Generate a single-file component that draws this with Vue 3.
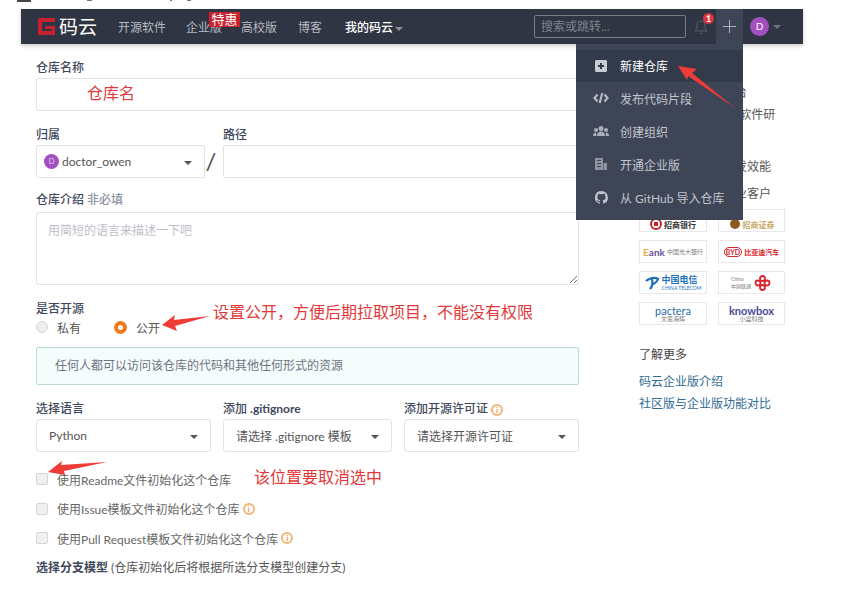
<script setup>
const navItems = [
  { label: '开源软件', w: 68 },
  { label: '企业版', w: 55 },
  { label: '高校版', w: 57 },
  { label: '博客', w: 47 }
];
const menu = [
  { label: '新建仓库', icon: 'plus', active: true },
  { label: '发布代码片段', icon: 'code' },
  { label: '创建组织', icon: 'group' },
  { label: '开通企业版', icon: 'building' },
  { label: '从 GitHub 导入仓库', icon: 'github' }
];
const checks = [
  { label: '使用Readme文件初始化这个仓库', tip: false },
  { label: '使用Issue模板文件初始化这个仓库', tip: true },
  { label: '使用Pull Request模板文件初始化这个仓库', tip: true }
];
const introLines = ['企业级代码托管平台', '面向 IT 团队的便捷软件研', '', '助企业大幅提升研发效能', '服务超过十万家企业客户'];
</script>

<template>
  <div class="page">
    <div class="top-strip">
      <span class="strip-block"></span>
      <span class="speck s1"></span>
      <span class="speck s2"></span>
      <span class="speck s3"></span>
    </div>

    <header class="navbar">
      <div class="logo">
        <svg width="17" height="17" viewBox="0 0 17 17">
          <path d="M1 0h16v4H4v9h10v-2H7V8h10v9H1l-1-1V1z" fill="#c7202e" />
        </svg>
        <span>码云</span>
      </div>
      <nav class="nav-links">
        <a v-for="item in navItems" :key="item.label" :style="{ width: item.w + 'px' }">{{ item.label }}</a>
        <a class="nav-mine">我的码云<i class="caret"></i></a>
      </nav>
      <span class="sale-tag">特惠</span>
      <div class="nav-right">
        <div class="search">搜索或跳转...</div>
        <div class="bell">
          <svg width="14" height="17" viewBox="0 0 14 17" fill="none" stroke="#59606e" stroke-width="1">
            <path d="M1 13c1.500-1.500 2-3 2-6 0-2.500 1.500-4 4-4s4 1.500 4 4c0 3 .5 4.500 2 6z" />
            <path d="M5.500 15c.5 1 2.500 1 3 0" />
          </svg>
          <span class="bell-badge">1</span>
        </div>
        <div class="plus-tab">
          <svg width="15" height="15" viewBox="0 0 15 15" stroke="#aeb3bd" stroke-width="1">
            <path d="M7.500 1v13M1 7.500h13" />
          </svg>
        </div>
        <div class="avatar">D</div>
        <i class="caret caret-dim"></i>
      </div>
    </header>

    <div class="content">
      <main class="form">
        <label class="label">仓库名称</label>
        <div class="input name-input"></div>

        <div class="owner-row">
          <div class="owner-col">
            <label class="label">归属</label>
            <div class="input select owner">
              <span class="mini-avatar">D</span>
              <span>doctor_owen</span>
              <i class="caret caret-dark"></i>
            </div>
          </div>
          <span class="slash">/</span>
          <div class="path-col">
            <label class="label">路径</label>
            <div class="input"></div>
          </div>
        </div>

        <label class="label intro-label">仓库介绍 <em>非必填</em></label>
        <div class="input textarea">
          用简短的语言来描述一下吧
          <svg class="grip" width="8" height="8" viewBox="0 0 8 8" stroke="#777" stroke-width="1">
            <path d="M1 8l7-7M5 8l3-3" />
          </svg>
        </div>

        <label class="label open-label">是否开源</label>
        <div class="radios">
          <span class="radio"><i class="dot"></i>私有</span>
          <span class="radio"><i class="dot dot-on"></i>公开</span>
        </div>
        <div class="notice">任何人都可以访问该仓库的代码和其他任何形式的资源</div>

        <div class="select-row">
          <div>
            <label class="label">选择语言</label>
            <div class="input select picker">Python<i class="caret caret-dark"></i></div>
          </div>
          <div>
            <label class="label">添加 <b>.gitignore</b></label>
            <div class="input select picker">请选择 .gitignore 模板<i class="caret caret-dark"></i></div>
          </div>
          <div>
            <label class="label">添加开源许可证<i class="tip">i</i></label>
            <div class="input select picker">请选择开源许可证<i class="caret caret-dark"></i></div>
          </div>
        </div>

        <ul class="checks">
          <li v-for="c in checks" :key="c.label">
            <i class="box"></i>{{ c.label }}<i v-if="c.tip" class="tip">i</i>
          </li>
        </ul>

        <p class="label branch"><b>选择分支模型</b> <span>(仓库初始化后将根据所选分支模型创建分支)</span></p>
      </main>

      <aside class="side">
        <p v-for="(line, i) in introLines" :key="i" class="side-line">{{ line }}</p>
        <div class="logos">
          <div class="card bottom-logo">
            <svg width="12" height="12" viewBox="0 0 12 12"><circle cx="6" cy="6" r="5" fill="none" stroke="#c8202e" stroke-width="2" /><rect x="4" y="4" width="4" height="4" fill="#c8202e" /></svg>
            <b class="logo-a">招商银行</b>
          </div>
          <div class="card bottom-logo">
            <svg width="12" height="12" viewBox="0 0 12 12"><circle cx="6" cy="6" r="5" fill="#8a5a20" /></svg>
            <b class="logo-b">招商证券</b>
          </div>
          <div class="card"><b class="logo-c"><u>E</u>ank</b><small class="small-bank">中国光大银行</small></div>
          <div class="card"><b class="logo-d"><s>BYD</s>比亚迪汽车</b></div>
          <div class="card">
            <svg width="15" height="14" viewBox="0 0 15 14" fill="none" stroke="#1c6fb8" stroke-width="2.200">
              <path d="M1 5c3-3 9-4 12-2-1 3-4 5-7 6M7 3c1 4 0 8-2 10" />
            </svg>
            <span class="telecom"><b>中国电信</b><small>CHINA TELECOM</small></span>
          </div>
          <div class="card">
            <span class="telecom grey"><small>China</small><small>中国联通</small></span>
            <svg width="19" height="16" viewBox="0 0 19 16" fill="none" stroke="#d8262e" stroke-width="1.800">
              <circle cx="9.500" cy="3.500" r="2.500" />
              <circle cx="5" cy="8" r="2.500" />
              <circle cx="14" cy="8" r="2.500" />
              <circle cx="9.500" cy="12.500" r="2.500" />
            </svg>
          </div>
          <div class="card stacked"><b class="logo-g">pactera</b><small>文思海辉</small></div>
          <div class="card stacked"><b class="logo-h">knowbox</b><small>小盒科技</small></div>
        </div>
        <h4 class="side-title">了解更多</h4>
        <a class="side-link">码云企业版介绍</a>
        <a class="side-link">社区版与企业版功能对比</a>
      </aside>
    </div>

    <!-- dropdown under the + tab -->
    <ul class="menu">
      <li v-for="m in menu" :key="m.label" :class="{ active: m.active }">
        <span class="menu-icon">
          <svg v-if="m.icon === 'plus'" width="12" height="12" viewBox="0 0 12 12">
            <path fill-rule="evenodd" d="M0 1l1-1h10l1 1v10l-1 1H1l-1-1zM5 3v2H3v2h2v2h2V7h2V5H7V3z" fill="#c9ccd3" />
          </svg>
          <svg v-else-if="m.icon === 'code'" width="16" height="12" viewBox="0 0 16 12" fill="none" stroke="#b4b8c1" stroke-width="2.200">
            <path d="M4.500 2.500L1.500 6l3 3.500M11.500 2.500L14.500 6l-3 3.500M9.300 1L6.700 11" />
          </svg>
          <svg v-else-if="m.icon === 'group'" width="16" height="10" viewBox="0 0 16 10" fill="#a9adb7">
            <circle cx="8" cy="2.500" r="2.500" />
            <circle cx="3" cy="4" r="2" />
            <circle cx="13" cy="4" r="2" />
            <path d="M4 10c0-3 1.500-4.500 4-4.500s4 1.500 4 4.500zM0 10c0-2 1-3.500 3-3.500l.5 3.500zM16 10c0-2-1-3.500-3-3.500l-.5 3.500z" />
          </svg>
          <svg v-else-if="m.icon === 'building'" width="12" height="12" viewBox="0 0 12 12" fill="#8f95a2">
            <path fill-rule="evenodd" d="M0 0h8v12H0zM2 2v1h4V2zM2 5v1h4V5zM2 8v1h4V8zM8.500 5H12v7H8.500z" />
          </svg>
          <svg v-else width="13" height="13" viewBox="0 0 16 16" fill="#c0c4cc">
            <path d="M8 0a8 8 0 0 0-2.500 15.600c.4.100.5-.2.500-.4v-1.400c-2.200.5-2.700-1-2.700-1-.4-.9-.9-1.200-.9-1.200-.7-.5.100-.5.100-.5.800.100 1.200.8 1.200.8.700 1.200 1.900.9 2.300.7.100-.5.300-.9.500-1.100-1.800-.2-3.600-.9-3.600-4 0-.9.300-1.600.8-2.100-.1-.2-.4-1 .1-2.100 0 0 .7-.2 2.200.8a7.500 7.500 0 0 1 4 0c1.500-1 2.200-.8 2.200-.8.500 1.100.2 1.900.1 2.100.5.600.8 1.300.8 2.100 0 3.100-1.900 3.700-3.700 3.900.3.300.6.800.6 1.500v2.200c0 .2.100.5.600.4A8 8 0 0 0 8 0z" />
          </svg>
        </span>
        {{ m.label }}
      </li>
    </ul>

    <!-- red notes drawn over the screenshot -->
    <span class="note note-name">仓库名</span>
    <span class="note note-open">设置公开，方便后期拉取项目，不能没有权限</span>
    <span class="note note-check">该位置要取消选中</span>
    <svg class="arrows" width="856" height="603" viewBox="0 0 856 603" fill="#ee3b36">
      <polygon points="678,66 697,69 692,73 735,108 688,76 687,80" />
      <polygon points="162,325 175,315 174,320 210,316 175,326 177,331" />
      <polygon points="48,472 62,461 61,465 107,462 64,471 65,475" />
    </svg>
  </div>
</template>

<style>
html,
body {
  margin: 0;
  background: #fff;
}
</style>

<style scoped>
.page {
  position: relative;
  width: 856px;
  height: 603px;
  overflow: hidden;
  font-family: Lato, "Noto Sans CJK SC", sans-serif;
  font-size: 12px;
  color: #40485b;
}

.top-strip {
  display: flex;
  align-items: flex-start;
  height: 9px;
  padding-left: 17px;
  box-sizing: border-box;
}

.strip-block {
  width: 14px;
  height: 2px;
  background: #444;
}

.speck {
  height: 1px;
  background: #777;
}

.s1 { width: 5px; margin-left: 56px; }
.s2 { width: 2px; margin-left: 78px; }
.s3 { width: 4px; margin-left: 15px; }

.navbar {
  position: relative;
  display: flex;
  align-items: center;
  width: 782px;
  height: 35px;
  margin-left: 21px;
  padding-left: 17px;
  box-sizing: border-box;
  background: #2f3542;
  box-shadow: 0 2px 4px rgba(0, 0, 0, 0.2);
}

.logo {
  display: flex;
  align-items: center;
  gap: 4px;
  width: 80px;
  color: #fff;
  font-size: 19px;
  line-height: 1;
}

.nav-links {
  display: flex;
  align-items: center;
}

.nav-links a {
  display: block;
  color: #b6bac2;
  white-space: nowrap;
}

.nav-mine {
  color: #fff !important;
  font-weight: 500;
}

.caret {
  display: inline-block;
  margin-left: 2px;
  vertical-align: 1px;
  border-left: 4px solid transparent;
  border-right: 4px solid transparent;
  border-top: 4px solid #8d929c;
}

.caret-dim {
  margin-left: 4px;
  border-top-color: #6f7480;
}

.caret-dark {
  position: absolute;
  right: 12px;
  top: 15px;
  margin: 0;
  border-top-color: #555;
}

.sale-tag {
  position: absolute;
  left: 188px;
  top: 3px;
  width: 31px;
  height: 15px;
  background: #c7202e;
  color: #fff;
  font-size: 13px;
  line-height: 15px;
  text-align: center;
}

.nav-right {
  position: absolute;
  right: 0;
  top: 0;
  bottom: 0;
  left: 513px;
  display: flex;
  align-items: center;
}

.search {
  width: 152px;
  height: 23px;
  box-sizing: border-box;
  padding-left: 6px;
  border: 1px solid #777c88;
  border-radius: 2px;
  color: #7f8490;
  line-height: 21px;
}

.bell {
  position: relative;
  display: flex;
  justify-content: center;
  width: 30px;
}

.bell-badge {
  position: absolute;
  left: 17px;
  top: -5px;
  width: 11px;
  height: 11px;
  border-radius: 50%;
  background: #d9363e;
  color: #fff;
  font-size: 9px;
  font-weight: 700;
  line-height: 11px;
  text-align: center;
}

.plus-tab {
  display: flex;
  align-items: center;
  justify-content: center;
  width: 27px;
  height: 100%;
  background: #3e4557;
}

.avatar {
  width: 19px;
  height: 19px;
  margin-left: 7px;
  border-radius: 50%;
  background: #a24fc0;
  color: #fff;
  font-size: 10px;
  line-height: 19px;
  text-align: center;
}

.content {
  display: flex;
  padding: 15px 0 0 36px;
}

.form {
  width: 543px;
  flex: none;
}

.label {
  display: block;
  height: 17px;
  margin-bottom: 2px;
  color: #40485b;
  font-weight: 500;
  line-height: 17px;
  white-space: nowrap;
}

.label em {
  color: #8c92a4;
  font-style: normal;
}

.input {
  position: relative;
  height: 33px;
  box-sizing: border-box;
  border: 1px solid #e3e4e6;
  border-radius: 2px;
  background: #fff;
}

.owner-row {
  display: flex;
  margin-top: 15px;
}

.owner-col {
  width: 169px;
}

.slash {
  width: 18px;
  padding: 20px 6px 0 0;
  box-sizing: border-box;
  font-size: 24px;
  line-height: 30px;
  text-align: center;
  color: #555;
}

.path-col {
  flex: 1;
}

.select {
  display: flex;
  align-items: center;
  color: #555;
}

.owner {
  padding-left: 7px;
  gap: 3px;
}

.mini-avatar {
  width: 15px;
  height: 15px;
  border-radius: 50%;
  background: #a24fc0;
  color: #e6c9f0;
  font-size: 8px;
  line-height: 15px;
  text-align: center;
}

.intro-label {
  margin-top: 13px;
  margin-bottom: 4px;
}

.textarea {
  height: 73px;
  padding: 8px 11px;
  color: #bbbec6;
}

.grip {
  position: absolute;
  right: 1px;
  bottom: 1px;
}

.open-label {
  margin-top: 15px;
  margin-bottom: 0;
}

.radios {
  display: flex;
  height: 20px;
  align-items: center;
  color: #555;
}

.radio {
  display: flex;
  align-items: center;
  gap: 9px;
  width: 78px;
}

.dot {
  width: 12px;
  height: 12px;
  box-sizing: border-box;
  border: 1px solid #d5d6d8;
  border-radius: 50%;
  background: #eee;
}

.dot-on {
  width: 13px;
  height: 13px;
  border: 4px solid #f0791b;
  background: #fff;
}

.notice {
  height: 38px;
  margin-top: 10px;
  padding-left: 18px;
  box-sizing: border-box;
  border: 1px solid #b9dcd8;
  border-radius: 2px;
  background: #f5fcfc;
  color: #6d7480;
  line-height: 36px;
}

.select-row {
  display: grid;
  grid-template-columns: 175px 169px 175px;
  gap: 12px;
  margin-top: 15px;
}

.picker {
  padding-left: 12px;
  border-radius: 3px;
  white-space: nowrap;
}

.tip {
  display: inline-block;
  width: 8px;
  height: 8px;
  margin-left: 3px;
  border: 2px solid #f3b477;
  border-radius: 50%;
  color: #e98a2c;
  font-size: 7px;
  font-style: normal;
  font-weight: 700;
  line-height: 8px;
  text-align: center;
}

.checks {
  margin: 18px 0 0;
  padding: 0;
  list-style: none;
  color: #666;
}

.checks li {
  display: flex;
  align-items: center;
  height: 18px;
  margin-bottom: 11.500px;
}

.box {
  width: 12px;
  height: 12px;
  margin-right: 9px;
  box-sizing: border-box;
  border: 1px solid #d5d6d8;
  border-radius: 2px;
  background: #f0f0f0;
}

.branch {
  margin: 0;
  font-weight: 400;
}

.branch span {
  color: #555;
}

.side {
  width: 146px;
  margin-left: 60px;
  flex: none;
  padding-top: 23px;
}

.side-line {
  height: 22px;
  margin: 0;
  color: #555;
  line-height: 22px;
  white-space: nowrap;
}

.side-line:nth-child(3) {
  height: 30px;
}

.side-line:nth-child(5) {
  margin-top: 5px;
}

.logos {
  display: grid;
  grid-template-columns: 68px 67px;
  grid-auto-rows: 23px;
  gap: 8px 11px;
  margin-top: 4px;
}

.card {
  display: flex;
  align-items: center;
  justify-content: center;
  gap: 2px;
  box-sizing: border-box;
  border: 1px solid #e8e8e8;
  overflow: hidden;
  font-size: 8px;
  white-space: nowrap;
}

.bottom-logo {
  align-items: flex-end;
  padding-bottom: 1px;
}

.card small {
  font-size: 6px;
  color: #777;
}

.small-bank {
  margin-top: -1px;
}

.stacked {
  flex-direction: column;
  gap: 0;
  line-height: 1;
}

.telecom {
  display: flex;
  flex-direction: column;
  gap: 2px;
  line-height: 1;
}

.telecom b {
  color: #1c6fb8;
  font-size: 9px;
  line-height: 9px;
}

.card .telecom small {
  font-size: 5px;
  line-height: 5px;
  color: #1c6fb8;
}

.card .telecom.grey small {
  color: #777;
}

.logo-a { color: #333; }
.logo-b { color: #c8a868; }
.logo-c { color: #6a4c9c; font-size: 10px; }
.logo-c u { color: #eda93a; text-decoration: none; }
.logo-d { color: #d8262e; font-size: 7px; }
.logo-d s {
  margin-right: 2px;
  padding: 0 1px;
  border: 1px solid #d8262e;
  border-radius: 5px;
  text-decoration: none;
}
.logo-g { color: #2d6aa8; font-size: 11px; font-weight: 400; }
.logo-h { color: #4a4a98; font-size: 11px; }

.side-title {
  margin: 21px 0 0;
  font-size: 12px;
  font-weight: 400;
  color: #444;
  line-height: 17px;
}

.side-link {
  display: block;
  margin-top: 5px;
  color: #2f6b94;
  line-height: 17px;
  white-space: nowrap;
}

.side-title + .side-link {
  margin-top: 10px;
}

.menu {
  position: absolute;
  left: 576px;
  top: 44px;
  width: 167px;
  height: 176px;
  margin: 0;
  padding: 6px 0 0;
  box-sizing: border-box;
  background: #3e4557;
  list-style: none;
  color: #c3c6cd;
}

.menu li {
  display: flex;
  align-items: center;
  height: 33px;
  padding: 0 0 1px 16px;
  box-sizing: border-box;
}

.menu .active {
  height: 32px;
  background: #333a4a;
  color: #fff;
}

.menu-icon {
  display: flex;
  align-items: center;
  justify-content: center;
  width: 18px;
  margin-right: 10px;
}

.note {
  position: absolute;
  color: #e2383a;
  font-size: 16px;
  line-height: 20px;
  white-space: nowrap;
}

.note-name { left: 87px; top: 83px; }
.note-open { left: 213px; top: 302px; }
.note-check { left: 254px; top: 467px; }

.arrows {
  position: absolute;
  left: 0;
  top: 0;
  pointer-events: none;
}
</style>
